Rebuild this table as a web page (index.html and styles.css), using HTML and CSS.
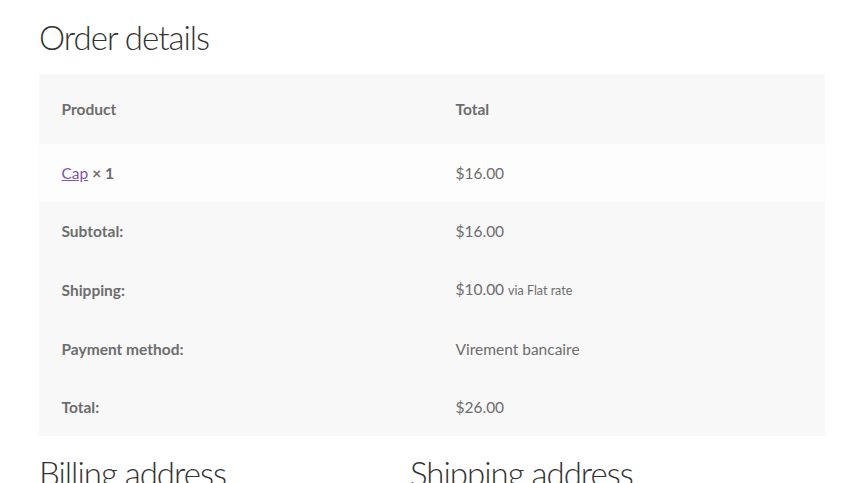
FILE: index.html
```html
<!DOCTYPE html>
<html>
<head>
<meta charset="utf-8">
<link rel="stylesheet" href="styles.css">
</head>
<body>
<section class="order">
  <h2 class="title">Order details</h2>
  <table class="details">
    <colgroup><col class="c1"><col class="c2"></colgroup>
    <thead>
      <tr><th>Product</th><th>Total</th></tr>
    </thead>
    <tbody>
      <tr class="item"><td><a href="#" class="link">Cap</a> <strong>× 1</strong></td><td>$16.00</td></tr>
    </tbody>
    <tfoot>
      <tr><th>Subtotal:</th><td>$16.00</td></tr>
      <tr><th>Shipping:</th><td>$10.00 <small class="via">via Flat rate</small></td></tr>
      <tr><th>Payment method:</th><td>Virement bancaire</td></tr>
      <tr><th>Total:</th><td>$26.00</td></tr>
    </tfoot>
  </table>
  <div class="addresses">
    <h2 class="addr">Billing address</h2>
    <h2 class="addr">Shipping address</h2>
  </div>
</section>
</body>
</html>
```

FILE: styles.css
```css
html, body {
  margin: 0;
  padding: 0;
  background: #ffffff;
  overflow: hidden;
}
body {
  font-family: Lato, "Liberation Sans", sans-serif;
  font-size: 15.5px;
  line-height: 1.618;
  color: #6d6d6d;
}
.order {
  padding: 0 29px 0 39px;
}
.title {
  margin: 0;
  padding-top: 17px;
  padding-bottom: 16px;
  font-size: 33px;
  font-weight: 300;
  letter-spacing: -1px;
  line-height: 1.24;
  color: #333333;
}
.details {
  width: 786px;
  border-collapse: collapse;
  border-spacing: 0;
  table-layout: fixed;
}
.c1 { width: 394px; }
.details th, .details td {
  text-align: left;
  padding: 16px 22.5px;
  height: 26px;
  line-height: 26px;
  vertical-align: middle;
}
.details th { font-weight: 700; }
.details thead th {
  padding: 22.5px 22.5px 22px;
  background: #f8f8f8;
}
.details tbody td { background: #fdfdfd; }
.details tfoot th, .details tfoot td { background: #f8f8f8; }
.link {
  color: #7f54b3;
  text-decoration: underline;
}
.via { font-size: 12.5px; }
.addresses {
  display: flex;
  margin-top: 18px;
}
.addr {
  margin: 0;
  width: 371px;
  font-size: 33px;
  font-weight: 300;
  letter-spacing: -1px;
  line-height: 1.2;
  color: #333333;
  white-space: nowrap;
}
```
